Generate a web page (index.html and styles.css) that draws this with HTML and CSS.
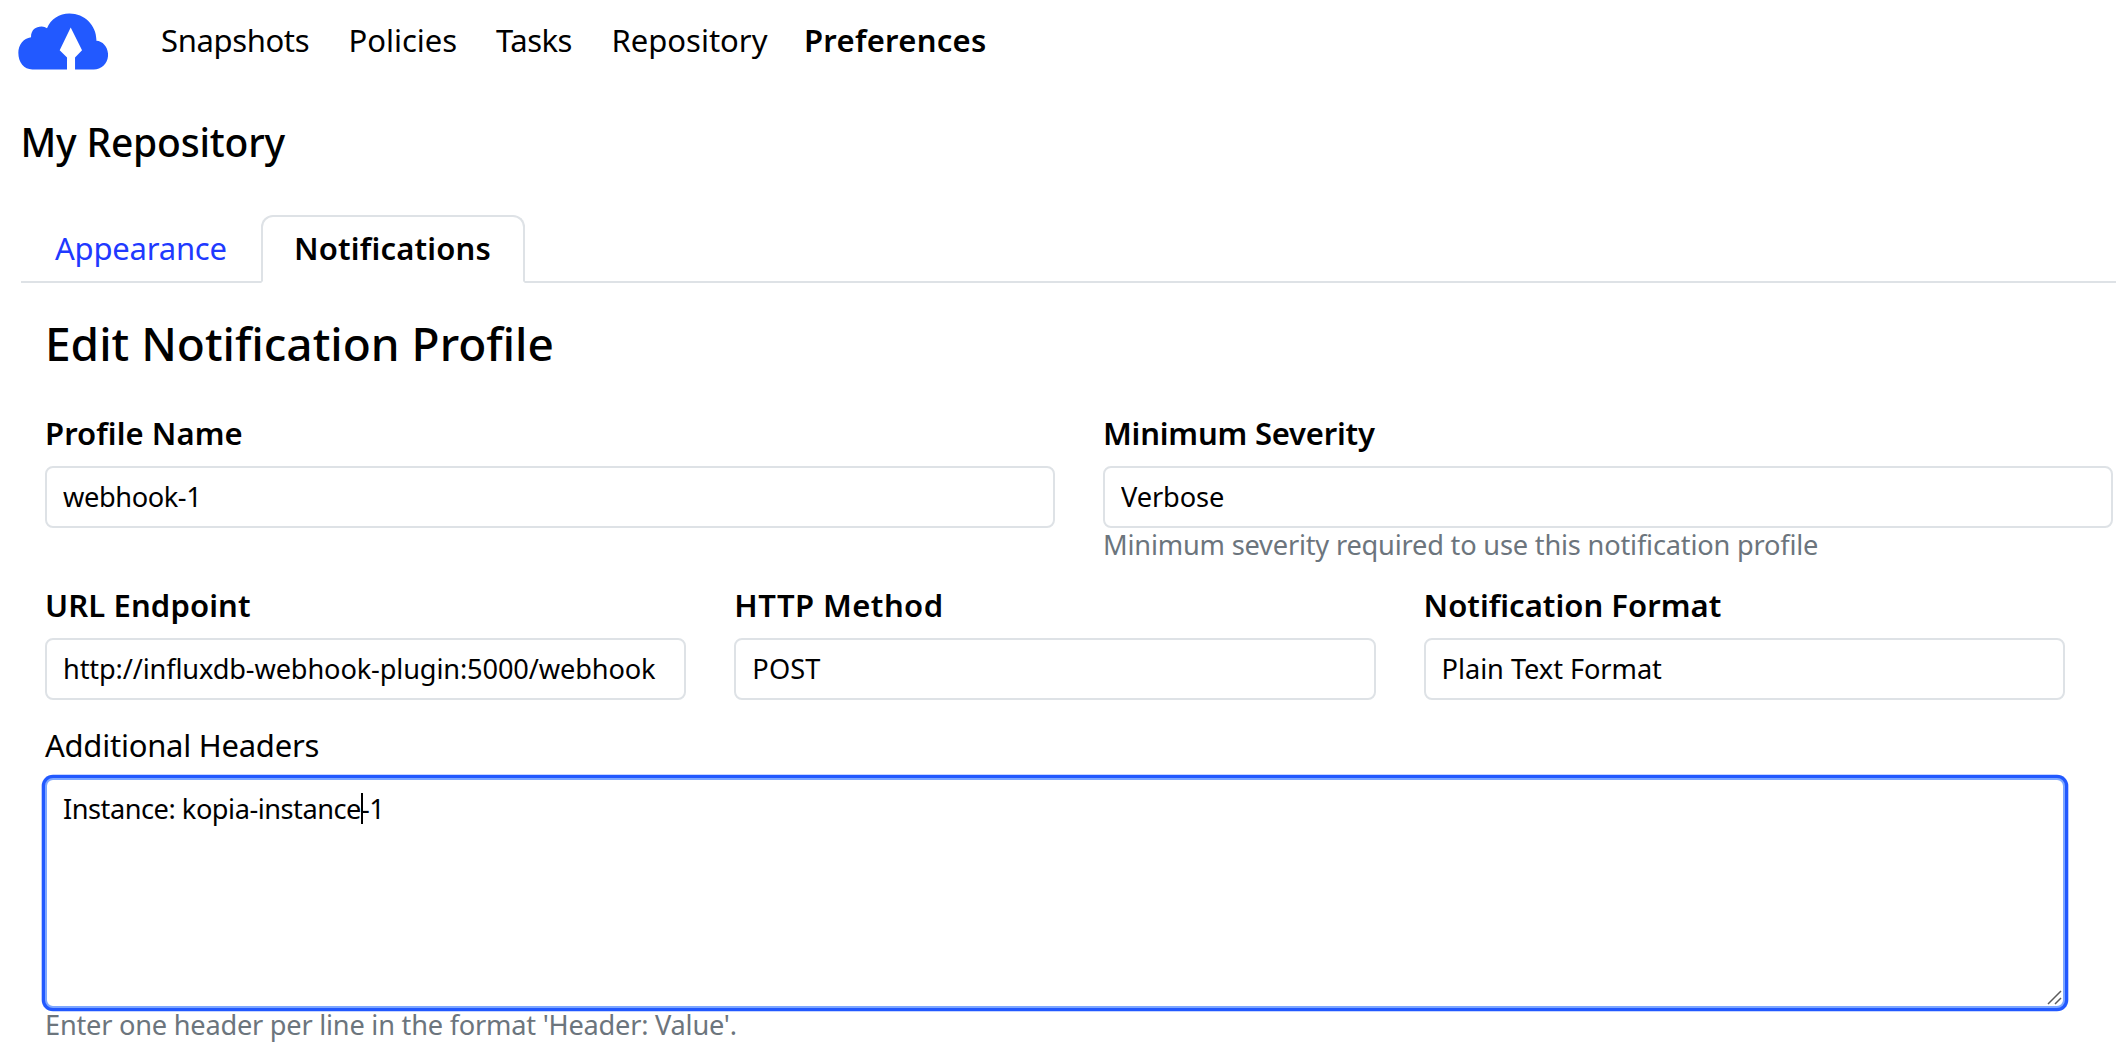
FILE: index.html
```html
<!DOCTYPE html>
<html lang="en">
<head>
<meta charset="utf-8">
<title>Preferences</title>
<link rel="stylesheet" href="styles.css">
</head>
<body>
<header class="navbar">
  <svg class="logo" viewBox="54 38 271 170" aria-hidden="true"><path fill="#2259ff" d="M97 207C72 207 55 186 55 157C55 133 70 113 93 110C93 88 107 78 125 78Q134 78 141 83C152 56 178 39 208 39C254 39 289 75 289 118V121C309 122 324 141 324 163C324 188 305 207 281 207H225V171L246 149L212 81L179 149L201 171V207Z"/></svg>
  <nav class="nav">
    <a class="snapshots">Snapshots</a>
    <a class="policies">Policies</a>
    <a class="tasks">Tasks</a>
    <a class="repository">Repository</a>
    <a class="preferences">Preferences</a>
  </nav>
</header>
<h5 class="repo-title">My Repository</h5>
<div class="tabs">
  <a class="tab appearance">Appearance</a>
  <a class="tab active">Notifications</a>
</div>
<form class="profile">
  <h4 class="heading">Edit Notification Profile</h4>
  <div class="row halves">
    <div class="field">
      <label class="label name">Profile Name</label>
      <input class="control webhook" value="webhook-1">
    </div>
    <div class="field">
      <label class="label severity">Minimum Severity</label>
      <input class="control verbose" value="Verbose">
      <small class="help required">Minimum severity required to use this notification profile</small>
    </div>
  </div>
  <div class="row thirds">
    <div class="field">
      <label class="label url">URL Endpoint</label>
      <input class="control endpoint" value="http://influxdb-webhook-plugin:5000/webhook">
    </div>
    <div class="field">
      <label class="label http">HTTP Method</label>
      <input class="control post" value="POST">
    </div>
    <div class="field">
      <label class="label format">Notification Format</label>
      <input class="control plain" value="Plain Text Format">
    </div>
  </div>
  <div class="field headers">
    <label class="label optional">Additional Headers</label>
    <div class="editor">
      <textarea class="control area">Instance: kopia-instance-1</textarea>
      <span class="caret"></span>
      <svg class="grip" viewBox="0 0 16 16" aria-hidden="true"><path d="M2 15L15 2M9 15L15 9" stroke="#5c5c5c" stroke-width="1.5"/></svg>
    </div>
    <small class="help enter">Enter one header per line in the format 'Header: Value'.</small>
  </div>
</form>
</body>
</html>
```
FILE: styles.css
```css
* { box-sizing: border-box; }
body { margin: 0; height: 1056px; overflow: hidden; background: #fff; color: #000; font: 400 31px/48px "Noto Sans", sans-serif; }
a { color: inherit; text-decoration: none; }

.navbar { display: flex; height: 118px; padding: 12.5px 0 0 18px; }
.logo { width: 90.4px; height: 57px; margin-right: 52.6px; flex: none; }
.nav { display: flex; padding-top: 3.5px; }
.snapshots { width: 187.5px; letter-spacing: -.36px; }
.policies { width: 147.5px; letter-spacing: 0; }
.tasks { width: 115.5px; letter-spacing: -.5px; }
.repository { width: 192.5px; letter-spacing: 0; }
.preferences { font-weight: 600; letter-spacing: .29px; }

.repo-title { margin: 0; padding-left: 20.5px; font-size: 39px; font-weight: 500; letter-spacing: -.2px; }
.tabs { display: flex; margin: 49px 0 0 21px; height: 68px; border-bottom: 2px solid #dee2e6; }
.tab { height: 68px; border: 2px solid transparent; line-height: 62px; }
.appearance { width: 240px; padding-left: 32px; color: #2039ff; letter-spacing: -.21px; }
.active { width: 264px; padding-left: 31px; border-color: #dee2e6 #dee2e6 #fff; border-radius: 12px 12px 0 0; background: #fff; font-weight: 600; letter-spacing: .18px; }

.profile { margin: 0; padding: 32px 3px 0 45px; }
.heading { margin: 0 0 38px; font-size: 46px; line-height: 56px; font-weight: 500; letter-spacing: 0; }
.row { display: grid; column-gap: 48px; }
.halves { grid-template-columns: 1010px 1010px; }
.thirds { grid-template-columns: 641.3px 641.3px 641.4px; margin-top: 19px; }
.field { display: flex; flex-direction: column; }
.label { margin-bottom: 9px; font-weight: 600; }
.control { width: 100%; height: 62px; margin: 0; padding: 7px 16px 9px; border: 2px solid #dee2e6; border-radius: 8px; outline: 0; background: #fff; color: #000; font: 400 27.2px/42px "Noto Sans", sans-serif; }
.help { color: #6c757d; font-size: 27.2px; line-height: 34px; }

.name { letter-spacing: .07px; }
.severity { letter-spacing: -.2px; }
.url { letter-spacing: .12px; }
.http { letter-spacing: .45px; }
.format { letter-spacing: .03px; }
.optional { font-weight: 400; letter-spacing: -.25px; }
.webhook { letter-spacing: -.4px; }
.verbose { letter-spacing: -.1px; }
.endpoint { letter-spacing: -.14px; }
.post { letter-spacing: .13px; }
.plain { letter-spacing: -.05px; }
.required { letter-spacing: -.19px; }
.enter { letter-spacing: -.23px; }

.headers { width: 2020px; margin-top: 21px; }
.editor { position: relative; height: 230px; }
.area { display: block; height: 230px; padding-top: 8px; border-color: #7da7ff; box-shadow: 0 0 0 3.3px #2259ff; letter-spacing: -.48px; resize: none; overflow: hidden; }
.caret { position: absolute; left: 316px; top: 15px; width: 2px; height: 31px; background: #000; }
.grip { position: absolute; right: 3px; bottom: 3px; width: 16px; height: 16px; }
```
